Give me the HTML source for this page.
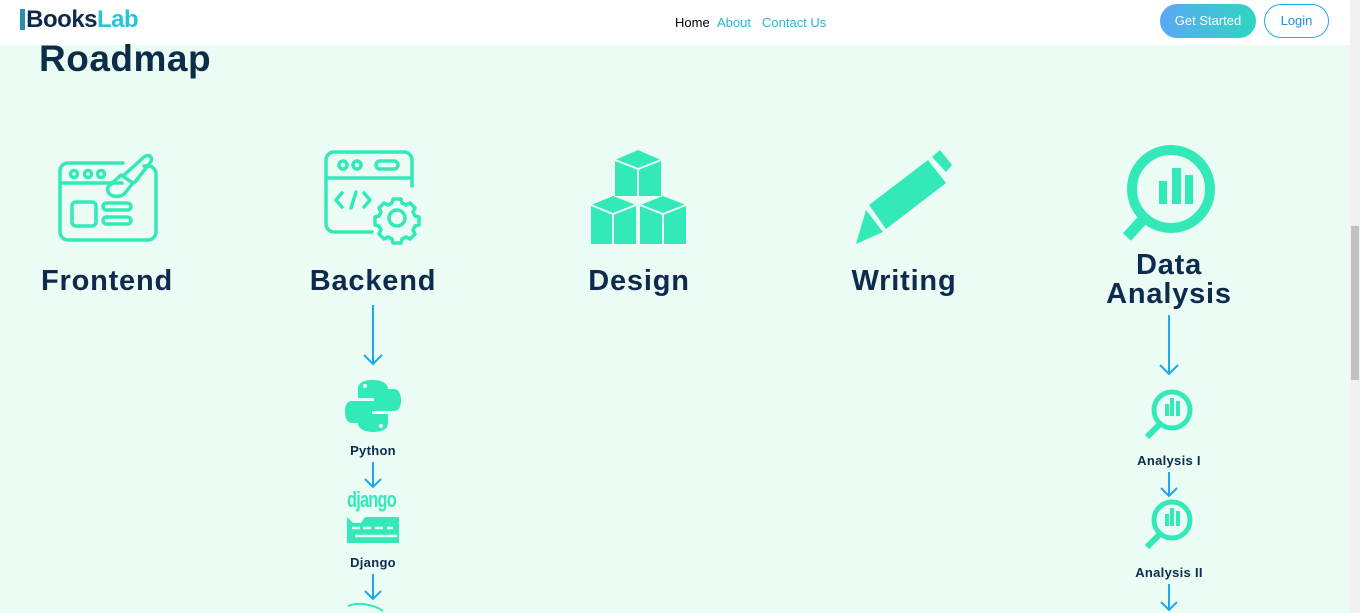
<!DOCTYPE html>
<html><head><style>
body{margin:0;width:1360px;height:613px;overflow:hidden;background:#ebfcf4;font-family:"Liberation Sans",sans-serif;position:relative}
.nav{position:absolute;left:0;top:0;width:1350px;height:45px;background:#fff}
.sb{position:absolute;right:0;top:0;width:10px;height:613px;background:#f1f1f1}
.sb div{position:absolute;left:1px;top:226px;width:8px;height:154px;background:#c1c1c1}
.t{position:absolute;font-weight:bold;color:#0e2a4d;text-align:center;transform:translateX(-50%);white-space:nowrap}
.big{font-size:29px;line-height:30px;letter-spacing:0.8px}
.sm{font-size:13px;letter-spacing:0.3px}
svg{position:absolute}
</style></head><body>
<div class="nav">
 <div style="position:absolute;left:20px;top:9px;width:5px;height:21px;background:#2a8fb0"></div>
 <div style="position:absolute;left:20px;top:6px;font-size:24px;font-weight:bold;letter-spacing:-0.5px"><span style="color:#0e2a4d">&nbsp;Books</span><span style="color:#22c6d8">Lab</span></div>
 <div style="position:absolute;left:675px;top:15px;font-size:13px;color:#000">Home</div>
 <div style="position:absolute;left:717px;top:15px;font-size:13px;color:#22b8d6">About</div>
 <div style="position:absolute;left:762px;top:15px;font-size:13px;color:#22b8d6">Contact Us</div>
 <div style="position:absolute;left:1160px;top:4px;width:96px;height:34px;border-radius:17px;background:linear-gradient(90deg,#5aa8f6,#2ed6c0);color:#fff;font-size:13px;line-height:34px;text-align:center">Get Started</div>
 <div style="position:absolute;left:1264px;top:4px;width:63px;height:32px;border-radius:17px;border:1px solid #1ba9ef;color:#1b8fe0;font-size:13px;line-height:32px;text-align:center">Login</div>
</div>
<div class="sb"><div></div></div>
<div style="position:absolute;left:39px;top:38px;font-size:37px;font-weight:bold;color:#0c2d48;letter-spacing:0.5px">Roadmap</div>

<svg width="1360" height="613" style="left:0;top:0" fill="none" stroke="#34e9b8" stroke-linecap="round" stroke-linejoin="round">
 <g stroke-width="3.5">
  <path d="M60 170v62a8 8 0 0 0 8 8h80a8 8 0 0 0 8-8v-58a8 8 0 0 0-8-8h-4M68 163h55M60 183h62M60 170a8 8 0 0 1 8-7"/>
  <circle cx="74" cy="174" r="3.5"/><circle cx="88" cy="174" r="3.5"/><circle cx="101" cy="174" r="3.5"/>
  <rect x="72" y="202" width="24" height="24" rx="4"/><rect x="103" y="203" width="28" height="7" rx="3.5"/><rect x="103" y="217" width="28" height="7" rx="3.5"/>
  <path d="M108 187c-3 10 12 12 17 6l8-10-12-8zM124 175l20-18c5-4 10 1 6 6l-15 19"/>
 </g>
 <g stroke-width="3.5">
  <path d="M372 232h-38a8 8 0 0 1-8-8v-64a8 8 0 0 1 8-8h70a8 8 0 0 1 8 8v26M326 178h86M353 232h10"/>
  <circle cx="343" cy="165" r="4"/><circle cx="357" cy="165" r="4"/><rect x="376" y="161" width="22" height="8" rx="4"/>
  <path d="M342 193l-6 7 6 7M356 192l-5 16M364 193l6 7-6 7"/>
  <circle cx="397" cy="218" r="8"/>
  <path d="M393 199h8l1 4 4 2 4-2 5 5-2 4 2 4 4 1v8l-4 1-2 4 2 4-5 5-4-2-4 2-1 4h-8l-1-4-4-2-4 2-5-5 2-4-2-4-4-1v-8l4-1 2-4-2-4 5-5 4 2 4-2z"/>
 </g>
</svg>
<svg width="1360" height="613" style="left:0;top:0">
 <g fill="#34e9b8">
  <polygon points="615,160 638,150 661,160 661,196 638,196 615,196"/>
  <polygon points="591,205 613,196 636,205 636,244 591,244"/>
  <polygon points="640,205 663,196 686,205 686,244 640,244"/>
  <polygon points="869,205 928,160 946,183 886,229"/>
  <polygon points="932,157 940,150 952,165 946,172"/>
  <polygon points="866,210 883,232 856,244"/>
 </g>
 <g stroke="#eafcf4" stroke-width="2" fill="none"><path d="M615 160l23 9 23-9M638 169v27M591 205l22 9 23-9M613 214v30M640 205l23 9 23-9M663 214v30"/></g>
 <g stroke="#34e9b8" fill="none">
  <circle cx="1171" cy="189" r="39" stroke-width="10"/>
  <path d="M1146 216l-19 21" stroke-width="11"/>
 </g>
 <g fill="#34e9b8"><rect x="1159" y="181" width="8" height="23"/><rect x="1172" y="168" width="9" height="36"/><rect x="1185" y="175" width="8" height="29"/></g>
 <g id="m"><circle cx="1172" cy="410" r="18" stroke="#34e9b8" stroke-width="5" fill="none"/><path d="M1160 424l-13 13" stroke="#34e9b8" stroke-width="6"/><rect x="1165" y="404" width="4" height="12" fill="#34e9b8"/><rect x="1170" y="398" width="4" height="18" fill="#34e9b8"/><rect x="1176" y="401" width="4" height="15" fill="#34e9b8"/></g>
 <use href="#m" y="110"/>
 <g fill="#34e9b8">
  <path d="M372 380c-10 0-14 4-14 9v9h16v3h-22c-6 0-7 6-7 11s2 11 7 11h6v-8c0-5 4-9 9-9h14c4 0 7-3 7-7v-10c0-5-5-9-16-9z"/>
  <path d="M374 432c10 0 14-4 14-9v-9h-16v-3h22c6 0 7-6 7-11s-2-11-7-11h-6v8c0 5-4 9-9 9h-14c-4 0-7 3-7 7v10c0 5 5 9 16 9z"/>
  <rect x="347" y="517" width="52" height="26"/>
 </g>
 <circle cx="365" cy="386" r="2" fill="#ebfcf4"/><circle cx="381" cy="426" r="2" fill="#ebfcf4"/>
 <path d="M347 517l6 6h8l4-6" fill="#ebfcf4"/>
 <g stroke="#ebfcf4" stroke-width="2.5"><path d="M352 528h8M363 528h8M375 528h8M387 528h6M355 536h42"/></g>
 <g stroke="#1ba9ef" stroke-width="2" fill="none">
  <path d="M373 305v59M364 355l9 9 9-9"/>
  <path d="M373 462v25M365 479l8 8 8-8"/>
  <path d="M373 574v25M365 591l8 8 8-8"/>
  <path d="M1169 315v59M1160 365l9 9 9-9"/>
  <path d="M1169 472v24M1161 488l8 8 8-8"/>
  <path d="M1169 584v26M1161 602l8 8 8-8"/>
 </g>
 <path d="M348 606c10-4 25-2 35 5" stroke="#34e9b8" stroke-width="2" fill="none"/>
</svg>
<div style="position:absolute;left:347px;top:486px;width:52px;font-size:22px;font-weight:bold;color:#34e9b8;letter-spacing:-1px;line-height:28px;transform:scaleX(0.74);transform-origin:0 0;white-space:nowrap">django</div>

<div class="t big" style="left:107px;top:266px">Frontend</div>
<div class="t big" style="left:373px;top:266px">Backend</div>
<div class="t big" style="left:639px;top:266px">Design</div>
<div class="t big" style="left:904px;top:266px">Writing</div>
<div class="t big" style="left:1169px;top:251px;line-height:29px">Data<br>Analysis</div>
<div class="t sm" style="left:373px;top:443px">Python</div>
<div class="t sm" style="left:373px;top:555px">Django</div>
<div class="t sm" style="left:1169px;top:453px">Analysis I</div>
<div class="t sm" style="left:1169px;top:565px">Analysis II</div>
</body></html>
